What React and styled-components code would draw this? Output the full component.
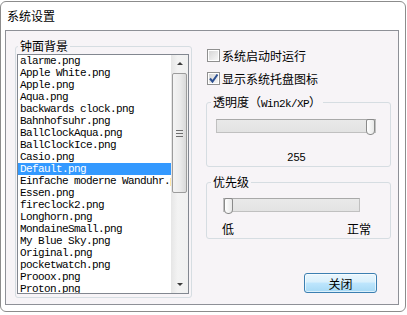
import styled, { createGlobalStyle } from "styled-components";

const GlobalStyle = createGlobalStyle`
  body {
    margin: 0;
    background: #fff;
    font-family: "Noto Sans CJK SC", sans-serif;
    font-size: 12px;
    color: #000;
  }
`;

const Window = styled.div`
  box-sizing: border-box;
  width: 406px;
  height: 311px;
  margin-top: 1px;
  border: 1px solid #8c8c8c;
  border-radius: 6px;
  background: #fff;
  display: flex;
  flex-direction: column;
`;

const Title = styled.div`
  height: 28px;
  line-height: 28px;
  padding-left: 6px;
  font-size: 12px;
  text-shadow: 0 0 4px rgba(255, 255, 255, 0.9);
`;

const Panel = styled.div`
  box-sizing: border-box;
  width: 394px;
  height: 275px;
  margin-left: 4px;
  border: 1px solid #8e9097;
  background: #f7f4f7;
  padding: 9px 0 0 9px;
  display: grid;
  grid-template-columns: 177px 185px;
  column-gap: 14px;
  align-items: start;
`;

const Group = styled.fieldset`
  box-sizing: border-box;
  margin: 0;
  min-width: 0;
  height: ${(p) => p.$h}px;
  padding: ${(p) => p.$pad || "0"};
  border: 1px solid #d6dde2;
  border-radius: 3px;
`;

const Legend = styled.legend`
  margin-left: ${(p) => p.$indent}px;
  padding: 0 2px;
  height: 12px;
  line-height: 12px;
  font-size: 12px;
`;

const Mono = styled.span`
  font-family: "Liberation Mono", monospace;
  font-size: 11px;
  letter-spacing: -0.6px;
`;

const ListBox = styled.div`
  box-sizing: border-box;
  width: 172px;
  height: 240px;
  margin-top: 2px;
  border: 1px solid #828790;
  background: #fff;
  display: flex;
  overflow: hidden;
`;

const Items = styled.div`
  width: 153px;
`;

const Item = styled.div`
  height: 12px;
  line-height: 12px;
  padding-left: 2px;
  white-space: nowrap;
  overflow: hidden;
  font-family: "Liberation Mono", monospace;
  font-size: 11px;
  letter-spacing: -0.6px;
  background: ${(p) => (p.$selected ? "#3399ff" : "transparent")};
  color: ${(p) => (p.$selected ? "#fff" : "#000")};
`;

const ScrollBar = styled.div`
  width: 17px;
  display: flex;
  flex-direction: column;
  background: linear-gradient(to right, #e6e6e6, #f3f3f3 40%, #f0f0f0);
`;

const Arrow = styled.div`
  height: 17px;
  display: flex;
  align-items: center;
  justify-content: center;
  &::after {
    content: "";
    border-left: 3px solid transparent;
    border-right: 3px solid transparent;
    ${(p) =>
      p.$down
        ? "border-top: 3px solid #3c3c3c;"
        : "border-bottom: 3px solid #3c3c3c;"}
  }
`;

const Thumb = styled.div`
  box-sizing: border-box;
  height: 120px;
  margin: 1px 1px 0 1px;
  border: 1px solid #9c9c9c;
  border-radius: 2px;
  background: linear-gradient(to right, #f4f4f4, #ececec 50%, #d9d9d9);
  display: flex;
  align-items: center;
  justify-content: center;
`;

const Grip = styled.div`
  width: 7px;
  height: 7px;
  background: repeating-linear-gradient(
    to bottom,
    #6f6f6f 0,
    #6f6f6f 1px,
    transparent 1px,
    transparent 3px
  );
`;

const Spacer = styled.div`
  flex: 1;
`;

const RightCol = styled.div`
  display: flex;
  flex-direction: column;
  padding-top: 9px;
`;

const CheckRow = styled.label`
  display: flex;
  align-items: center;
  gap: 2px;
  height: 13px;
  line-height: 13px;
  margin-bottom: 10px;
  margin-left: 1px;
`;

const Box = styled.span`
  box-sizing: border-box;
  width: 13px;
  height: 13px;
  border: 1px solid #8f8f8f;
  background: #fff;
  padding: 1px;
  display: flex;
  & > span {
    flex: 1;
    background: linear-gradient(135deg, #d6d6d6, #f6f6f6);
    position: relative;
  }
  svg {
    position: absolute;
    left: -1px;
    top: -1px;
  }
`;

const Track = styled.div`
  box-sizing: border-box;
  position: relative;
  width: ${(p) => p.$w}px;
  height: 14px;
  margin: ${(p) => p.$m};
  border: 1px solid #c0c0c0;
  border-top-color: #a9a9a9;
  background: linear-gradient(to bottom, #e9e9e9, #e3e3e3);
`;

const Knob = styled.div`
  box-sizing: border-box;
  position: absolute;
  top: -1px;
  ${(p) => (p.$right ? "right: 0;" : "left: 0;")}
  width: 9px;
  height: 16px;
  border: 1px solid #8a8a8a;
  border-radius: 2px 2px 4px 4px;
  background: linear-gradient(to right, #ffffff, #e8e8e8);
`;

const Value = styled.div`
  height: 12px;
  line-height: 12px;
  margin-top: 18px;
  text-align: center;
  font-family: "Liberation Sans", sans-serif;
  font-size: 11px;
  padding-right: 4px;
`;

const Scale = styled.div`
  display: flex;
  justify-content: space-between;
  height: 12px;
  line-height: 12px;
  margin-top: 11px;
  padding: 0 19px 0 15px;
`;

const Button = styled.button`
  box-sizing: border-box;
  align-self: flex-end;
  width: 73px;
  height: 20px;
  margin: 34px 14px 0 0;
  padding: 0;
  border: 1px solid #3c7fb1;
  border-radius: 3px;
  font-family: "Noto Sans CJK SC", sans-serif;
  font-size: 12px;
  color: #000;
  background: linear-gradient(
    to bottom,
    #eaf6fd 0%,
    #d9f0fc 45%,
    #bee6fd 50%,
    #a7d9f5 100%
  );
  box-shadow: inset 0 0 0 1px rgba(255, 255, 255, 0.6);
`;

const files = [
  "alarme.png",
  "Apple White.png",
  "Apple.png",
  "Aqua.png",
  "backwards clock.png",
  "Bahnhofsuhr.png",
  "BallClockAqua.png",
  "BallClockIce.png",
  "Casio.png",
  "Default.png",
  "Einfache moderne Wanduhr.png",
  "Essen.png",
  "fireclock2.png",
  "Longhorn.png",
  "MondaineSmall.png",
  "My Blue Sky.png",
  "Original.png",
  "pocketwatch.png",
  "Prooox.png",
  "Proton.png",
];

function CheckBox({ checked }) {
  return (
    <Box>
      <span>
        {checked && (
          <svg width="11" height="11" viewBox="0 0 11 11">
            <path
              d="M2 5.5 L4.5 8.5 L9.5 1.5"
              fill="none"
              stroke="#2c4f91"
              strokeWidth="2"
            />
          </svg>
        )}
      </span>
    </Box>
  );
}

export default function App() {
  return (
    <>
      <GlobalStyle />
      <Window>
        <Title>系统设置</Title>
        <Panel>
          <Group $h={258} $pad="0 2px 3px 1px">
            <Legend $indent={1}>钟面背景</Legend>
            <ListBox>
              <Items>
                {files.map((f) => (
                  <Item key={f} $selected={f === "Default.png"}>
                    {f}
                  </Item>
                ))}
              </Items>
              <ScrollBar>
                <Arrow />
                <Thumb>
                  <Grip />
                </Thumb>
                <Spacer />
                <Arrow $down />
              </ScrollBar>
            </ListBox>
          </Group>

          <RightCol>
            <CheckRow>
              <CheckBox />
              系统启动时运行
            </CheckRow>
            <CheckRow>
              <CheckBox checked />
              显示系统托盘图标
            </CheckRow>

            <Group $h={71} style={{ marginTop: 1 }}>
              <Legend $indent={4}>
                透明度（<Mono>Win2k/XP</Mono>）
              </Legend>
              <Track $w={160} $m="11px 0 0 9px">
                <Knob $right />
              </Track>
              <Value>255</Value>
            </Group>

            <Group $h={63} style={{ marginTop: 9 }}>
              <Legend $indent={4}>优先级</Legend>
              <Track $w={137} $m="10px 0 0 16px">
                <Knob />
              </Track>
              <Scale>
                <span>低</span>
                <span>正常</span>
              </Scale>
            </Group>

            <Button>关闭</Button>
          </RightCol>
        </Panel>
      </Window>
    </>
  );
}
